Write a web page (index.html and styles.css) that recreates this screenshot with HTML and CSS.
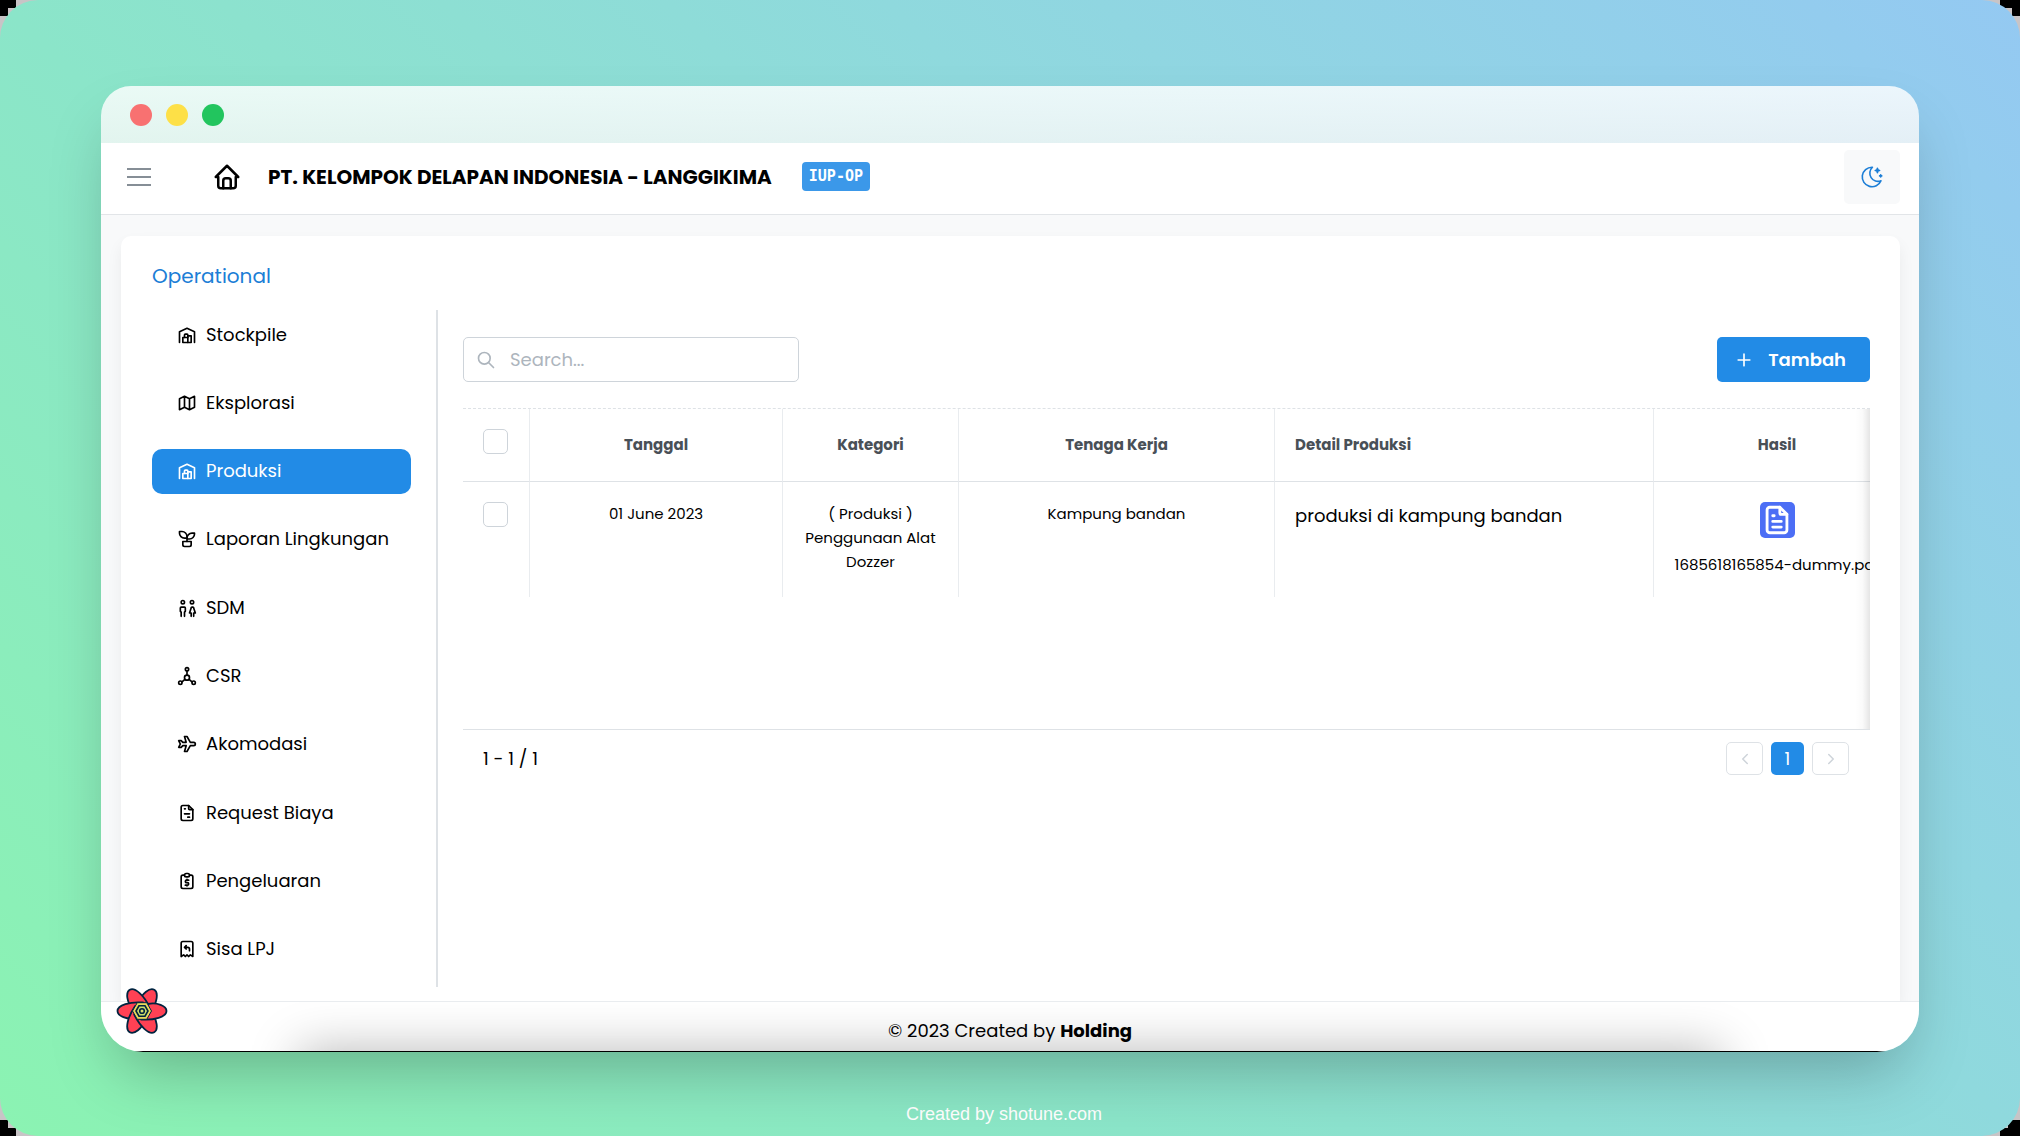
FILE: index.html
```html
<!DOCTYPE html>
<html lang="id">
<head>
<meta charset="utf-8">
<meta name="viewport" content="width=device-width, initial-scale=1">
<title>PT. Kelompok Delapan Indonesia - Produksi</title>
<link rel="stylesheet" href="styles.css">
</head>
<body>
<svg class="sprite" aria-hidden="true">
  <symbol id="i-warehouse" viewBox="0 0 24 24"><path d="M3 21V8l9-4 9 4v13"/><path d="M13 13h4v8H7v-6h6"/><path d="M13 21v-9a1 1 0 0 0-1-1h-2a1 1 0 0 0-1 1v3"/></symbol>
  <symbol id="i-map" viewBox="0 0 24 24"><path d="M3 7l6-3 6 3 6-3v13l-6 3-6-3-6 3V7M9 4v13M15 7v13"/></symbol>
  <symbol id="i-plant" viewBox="0 0 24 24"><path d="M7 15h10v4a2 2 0 0 1-2 2H9a2 2 0 0 1-2-2v-4z"/><path d="M12 9a6 6 0 0 0-6-6H3v2a6 6 0 0 0 6 6h3"/><path d="M12 11a6 6 0 0 1 6-6h3v1a6 6 0 0 1-6 6h-3M12 15V9"/></symbol>
  <symbol id="i-people" viewBox="0 0 24 24"><path d="M5 22v-5l-1-1v-4a1 1 0 0 1 1-1h4a1 1 0 0 1 1 1v4l-1 1v5M17 22v-4h-2l2-6a1 1 0 0 1 1-1h1a1 1 0 0 1 1 1l2 6h-2v4"/><circle cx="7" cy="5" r="2"/><circle cx="18" cy="5" r="2"/></symbol>
  <symbol id="i-topology" viewBox="0 0 24 24"><circle cx="12" cy="4" r="2"/><circle cx="4" cy="20" r="2"/><circle cx="20" cy="20" r="2"/><circle cx="12" cy="14" r="3"/><path d="M12 6v5M6 19l3.500-3M14.500 16l3.500 3"/></symbol>
  <symbol id="i-plane" viewBox="0 0 24 24"><path d="M16 10h4a2 2 0 0 1 0 4h-4l-4 7H9l2-7H7l-2 2H2l2-4-2-4h3l2 2h4L9 3h3z"/></symbol>
  <symbol id="i-invoice" viewBox="0 0 24 24"><path d="M14 3v4a1 1 0 0 0 1 1h4"/><path d="M17 21H7a2 2 0 0 1-2-2V5a2 2 0 0 1 2-2h7l5 5v11a2 2 0 0 1-2 2zM9 7h1M9 13h6M13 17h2"/></symbol>
  <symbol id="i-doc" viewBox="0 0 24 24"><path d="M14 3v4a1 1 0 0 0 1 1h4"/><path d="M17 21H7a2 2 0 0 1-2-2V5a2 2 0 0 1 2-2h7l5 5v11a2 2 0 0 1-2 2zM9 9h1M9 13h6M9 17h6"/></symbol>
  <symbol id="i-clip" viewBox="0 0 24 24"><path d="M9 5H7a2 2 0 0 0-2 2v12a2 2 0 0 0 2 2h10a2 2 0 0 0 2-2V7a2 2 0 0 0-2-2h-2"/><rect x="9" y="3" width="6" height="4" rx="2"/><path d="M14 11h-2.500a1.500 1.500 0 0 0 0 3h1a1.500 1.500 0 0 1 0 3H10M12 17v1M12 10v1"/></symbol>
  <symbol id="i-refund" viewBox="0 0 24 24"><path d="M5 21V5a2 2 0 0 1 2-2h10a2 2 0 0 1 2 2v16l-3-2-2 2-2-2-2 2-2-2-3 2"/><path d="M15 14v-2a2 2 0 0 0-2-2H9l2-2M11 12l-2-2"/></symbol>
  <symbol id="i-home" viewBox="0 0 24 24"><path d="M5 12H3l9-9 9 9h-2M5 12v7a2 2 0 0 0 2 2h10a2 2 0 0 0 2-2v-7"/><path d="M9 21v-6a2 2 0 0 1 2-2h2a2 2 0 0 1 2 2v6"/></symbol>
  <symbol id="i-moon" viewBox="0 0 24 24"><path d="M12 3h.393a7.500 7.500 0 0 0 7.920 12.446A9 9 0 1 1 12 2.992zM17 4a2 2 0 0 0 2 2 2 2 0 0 0-2 2 2 2 0 0 0-2-2 2 2 0 0 0 2-2M19 11h2M20 10v2"/></symbol>
  <symbol id="i-search" viewBox="0 0 24 24"><circle cx="10" cy="10" r="7"/><path d="M21 21l-6-6"/></symbol>
  <symbol id="i-plus" viewBox="0 0 24 24"><path d="M12 5v14M5 12h14"/></symbol>
  <symbol id="i-left" viewBox="0 0 24 24"><path d="M15 6l-6 6 6 6"/></symbol>
  <symbol id="i-right" viewBox="0 0 24 24"><path d="M9 6l6 6-6 6"/></symbol>
</svg>

<div class="stage">
  <div class="window">
    <div class="titlebar"><span class="dot red"></span><span class="dot yellow"></span><span class="dot green"></span></div>
    <header class="topbar">
      <button class="burger" type="button" aria-label="Menu"><span></span><span></span><span></span></button>
      <a class="home" href="#" aria-label="Home"><svg class="icon"><use href="#i-home"/></svg></a>
      <h1 class="company">PT. KELOMPOK DELAPAN INDONESIA - LANGGIKIMA</h1>
      <span class="badge">IUP-OP</span>
      <button class="theme" type="button" aria-label="Tema"><svg class="icon"><use href="#i-moon"/></svg></button>
    </header>
    <main class="main">
      <section class="card">
        <h2 class="heading">Operational</h2>
        <div class="columns">
          <nav class="nav">
            <a class="item" href="#"><svg class="icon"><use href="#i-warehouse"/></svg>Stockpile</a>
            <a class="item" href="#"><svg class="icon"><use href="#i-map"/></svg>Eksplorasi</a>
            <a class="item active" href="#" aria-current="page"><svg class="icon"><use href="#i-warehouse"/></svg>Produksi</a>
            <a class="item" href="#"><svg class="icon"><use href="#i-plant"/></svg>Laporan Lingkungan</a>
            <a class="item" href="#"><svg class="icon"><use href="#i-people"/></svg>SDM</a>
            <a class="item" href="#"><svg class="icon"><use href="#i-topology"/></svg>CSR</a>
            <a class="item" href="#"><svg class="icon"><use href="#i-plane"/></svg>Akomodasi</a>
            <a class="item" href="#"><svg class="icon"><use href="#i-invoice"/></svg>Request Biaya</a>
            <a class="item" href="#"><svg class="icon"><use href="#i-clip"/></svg>Pengeluaran</a>
            <a class="item" href="#"><svg class="icon"><use href="#i-refund"/></svg>Sisa LPJ</a>
          </nav>
          <div class="content">
            <div class="toolbar">
              <label class="search"><svg class="icon"><use href="#i-search"/></svg><input type="text" placeholder="Search..." aria-label="Search"></label>
              <button class="add" type="button"><svg class="icon"><use href="#i-plus"/></svg>Tambah</button>
            </div>
            <div class="table-area">
              <table class="table">
                <colgroup><col class="c-check"><col class="c-date"><col class="c-kind"><col class="c-staff"><col class="c-detail"><col class="c-file"></colgroup>
                <thead>
                  <tr>
                    <th class="pick"><input type="checkbox" aria-label="Pilih semua"></th>
                    <th>Tanggal</th><th>Kategori</th><th>Tenaga Kerja</th><th class="left">Detail Produksi</th><th>Hasil</th>
                  </tr>
                </thead>
                <tbody>
                  <tr>
                    <td class="pick"><input type="checkbox" aria-label="Pilih baris"></td>
                    <td>01 June 2023</td>
                    <td>( Produksi )<br>Penggunaan Alat<br>Dozzer</td>
                    <td>Kampung bandan</td>
                    <td class="left detail">produksi di kampung bandan</td>
                    <td class="file"><a href="#" aria-label="Buka file"><svg class="icon"><use href="#i-doc"/></svg></a><span>1685618165854-dummy.pdf</span></td>
                  </tr>
                </tbody>
              </table>
            </div>
            <div class="pager">
              <span>1 - 1 / 1</span>
              <div class="pages">
                <button class="step" type="button" disabled aria-label="Sebelumnya"><svg class="icon"><use href="#i-left"/></svg></button>
                <button class="current" type="button">1</button>
                <button class="step" type="button" disabled aria-label="Berikutnya"><svg class="icon"><use href="#i-right"/></svg></button>
              </div>
            </div>
          </div>
        </div>
      </section>
    </main>
    <footer class="footer"><span class="copyright">© 2023 Created by <b>Holding</b></span></footer>
    <button class="devtools" type="button" aria-label="React Query Devtools">
      <svg viewBox="-26 -24 52 48">
        <defs><path id="petal" d="M6-7C15-9 24.500-5 24.500 0C24.500 6 12 9.500-1 8.500z"/></defs>
        <g fill="#ff4154" stroke="#00233f" stroke-width="1.800" stroke-linejoin="round">
          <use href="#petal" transform="rotate(300)"/><use href="#petal" transform="rotate(240)"/><use href="#petal" transform="rotate(180)"/><use href="#petal" transform="rotate(120)"/><use href="#petal" transform="rotate(60)"/><use href="#petal"/>
        </g>
        <path d="M-9.500 0l4.750-8.300h9.500L9.500 0l-4.750 8.300h-9.500z" fill="#e8d95a" stroke="#00233f" stroke-width="1"/>
        <path d="M-6 0l3-5.200h6L6 0 3 5.200h-6z" fill="#c9dd6a" stroke="#00233f" stroke-width="1.600"/>
        <circle r="2.300" fill="#d8e070" stroke="#00233f" stroke-width="1.600"/>
      </svg>
    </button>
  </div>
  <p class="credit">Created by shotune.com</p>
</div>
</body>
</html>
```
FILE: styles.css
```css
* { box-sizing: border-box; }
body {
  margin: 0;
  background:
    linear-gradient(#000, #000) 0 0 / 16px 8px,
    linear-gradient(#000, #000) 0 0 / 8px 16px,
    linear-gradient(#000, #000) 100% 0 / 20px 8px,
    linear-gradient(#000, #000) 100% 0 / 8px 16px,
    linear-gradient(#000, #000) 0 100% / 16px 8px,
    linear-gradient(#000, #000) 0 100% / 8px 16px,
    linear-gradient(#000, #000) 100% 100% / 20px 8px,
    linear-gradient(#000, #000) 100% 100% / 12px 16px,
    #c8c4c6;
  background-repeat: no-repeat;
  color: #000;
  font: 18px/28px Poppins, Inter, "Liberation Sans", sans-serif;
}
h1, h2, p { margin: 0; }
button, input { font: inherit; }
button { border: 0; padding: 0; background: none; cursor: pointer; }
a { color: inherit; text-decoration: none; }
.sprite { display: none; }
.icon {
  display: block;
  flex: none;
  width: 20px;
  height: 20px;
  fill: none;
  stroke: currentColor;
  stroke-width: 2;
  stroke-linecap: round;
  stroke-linejoin: round;
}

.stage {
  display: flex;
  flex-direction: column;
  min-height: 100vh;
  padding: 86px 101px 0;
  border-radius: 38px;
  background: linear-gradient(45deg, #8bf3b2, #8be5c9 36%, #8fd9dd 64%, #94c9f2);
}
.window {
  position: relative;
  flex: 1;
  display: flex;
  flex-direction: column;
  border-radius: 30px 30px 42px 42px;
  box-shadow: 0 32px 64px -15px rgba(0, 0, 0, .26);
}
.titlebar {
  display: flex;
  align-items: center;
  gap: 14px;
  height: 57px;
  padding: 0 29px;
  border-radius: 30px 30px 0 0;
  background: linear-gradient(rgba(255, 255, 255, .82), rgba(248, 248, 248, .8));
}
.dot { width: 22px; height: 22px; border-radius: 50%; }
.red { background: #f87171; }
.yellow { background: #fde047; }
.green { background: #22c55e; }

.topbar {
  display: flex;
  align-items: center;
  height: 72px;
  padding: 0 19px 4px 26px;
  background: #fff;
  border-bottom: 1px solid #e2e5e8;
}
.burger { display: flex; flex-direction: column; gap: 6px; width: 24px; }
.burger span { height: 2px; background: #868e96; }
.home { margin-left: 61px; }
.home .icon { width: 30px; height: 30px; }
.company { margin-left: 26px; font-size: 20px; font-weight: 700; }
.badge {
  margin-left: 30px;
  padding: 0 7px;
  border-radius: 4px;
  background: #3b98e9;
  color: #fff;
  font: 700 15px/29px "DejaVu Sans Mono", monospace;
}
.theme {
  display: grid;
  place-items: center;
  width: 56px;
  height: 54px;
  margin-left: auto;
  border-radius: 5px;
  background: #f8f9fa;
  color: #1c7ed6;
}
.theme .icon { width: 26px; height: 26px; stroke-width: 1.5; }

.main { flex: 1; display: flex; padding: 21px 19px 0 20px; background: #f8f9fa; }
.card {
  flex: 1;
  min-width: 0;
  display: flex;
  flex-direction: column;
  padding: 24px 30px 14px 31px;
  border-radius: 10px 10px 0 0;
  background: #fff;
  box-shadow: 0 8px 16px rgba(0, 0, 0, .06);
}
.heading { margin-bottom: 18px; font-size: 20px; line-height: 32px; font-weight: 400; color: #1c7ed6; }
.columns { flex: 1; display: flex; }
.nav {
  flex: none;
  display: flex;
  flex-direction: column;
  justify-content: space-between;
  gap: 22px;
  width: 286px;
  padding: 2px 25px 15px 0;
  border-right: 2px solid #dee2e6;
}
.item {
  display: flex;
  align-items: center;
  gap: 9px;
  height: 45px;
  padding: 0 25px;
  border-radius: 10px;
  white-space: nowrap;
}
.active { background: #228be6; color: #fff; }

.content { flex: 1; min-width: 0; padding: 27px 0 0 25px; }
.toolbar { display: flex; justify-content: space-between; margin-bottom: 26px; }
.search {
  display: flex;
  align-items: center;
  gap: 14px;
  width: 336px;
  height: 45px;
  padding: 0 12px;
  border: 1px solid #ced4da;
  border-radius: 5px;
  color: #adb5bd;
}
.search input { width: 100%; border: 0; outline: 0; padding: 0; background: none; }
.search input::placeholder { color: #adb5bd; }
.add {
  display: flex;
  align-items: center;
  gap: 14px;
  height: 45px;
  padding: 0 24px 0 17px;
  border-radius: 5px;
  background: #228be6;
  color: #fff;
  font-weight: 600;
}

.table-area {
  position: relative;
  height: 322px;
  overflow: hidden;
  border-top: 1px dashed #dee2e6;
  border-bottom: 1px solid #dee2e6;
}
.table-area::after {
  content: "";
  position: absolute;
  inset: 0 0 0 auto;
  width: 15px;
  background: linear-gradient(to right, transparent, rgba(0, 0, 0, .02) 50%, rgba(0, 0, 0, .1));
}
.table { width: 1438px; table-layout: fixed; border-collapse: separate; border-spacing: 0; }
.c-check { width: 67px; }
.c-date { width: 253px; }
.c-kind { width: 176px; }
.c-staff { width: 316px; }
.c-detail { width: 379px; }
th, td {
  padding: 20px;
  border-right: 1px solid #e9ecef;
  text-align: center;
  vertical-align: top;
  font-size: 15px;
  line-height: 24px;
}
th { height: 73px; padding: 24px 20px 0; border-bottom: 1px solid #dee2e6; color: #495057; font-weight: 700; }
td { height: 114px; }
.left { text-align: left; }
.detail { font-size: 18px; line-height: 28px; }
th.pick { padding-top: 20px; }
.pick input {
  display: block;
  appearance: none;
  width: 25px;
  height: 25px;
  margin: 0;
  border: 1px solid #ced4da;
  border-radius: 5px;
  background: #fff;
}
td.file { white-space: nowrap; }
.file a {
  display: grid;
  place-items: center;
  width: 35px;
  height: 36px;
  margin: 0 auto 15px;
  border-radius: 5px;
  background: #4c6ef5;
  color: #fff;
}
.file .icon { width: 34px; height: 34px; }
.pager { display: flex; align-items: center; justify-content: space-between; padding: 12px 21px 12px 20px; }
.pages { display: flex; gap: 8px; }
.pages button { display: grid; place-items: center; height: 33px; border-radius: 5px; }
.step { width: 37px; border: 1px solid #dee2e6; color: #ced4da; }
.pages .current { width: 33px; background: #228be6; color: #fff; }
.step .icon { width: 18px; height: 18px; }

.footer {
  position: relative;
  overflow: hidden;
  display: flex;
  justify-content: center;
  align-items: center;
  height: 51px;
  padding-top: 8px;
  border-top: 1px solid #e9ecef;
  border-radius: 0 0 42px 42px;
  background: linear-gradient(#000, #000) 0 100% / 100% 1px no-repeat #fff;
}
.footer::after {
  content: "";
  position: absolute;
  top: 100%;
  left: 200px;
  right: 200px;
  height: 60px;
  box-shadow: 0 0 50px 2px rgba(0, 0, 0, .28);
}
.copyright { position: relative; z-index: 1; }
.devtools { position: absolute; left: 15px; bottom: 17px; width: 52px; height: 48px; }
.devtools svg { display: block; }
.credit {
  padding: 48px 12px 8px 0;
  color: #fff;
  text-align: center;
  font: 18px/28px "Liberation Sans", sans-serif;
}
```
